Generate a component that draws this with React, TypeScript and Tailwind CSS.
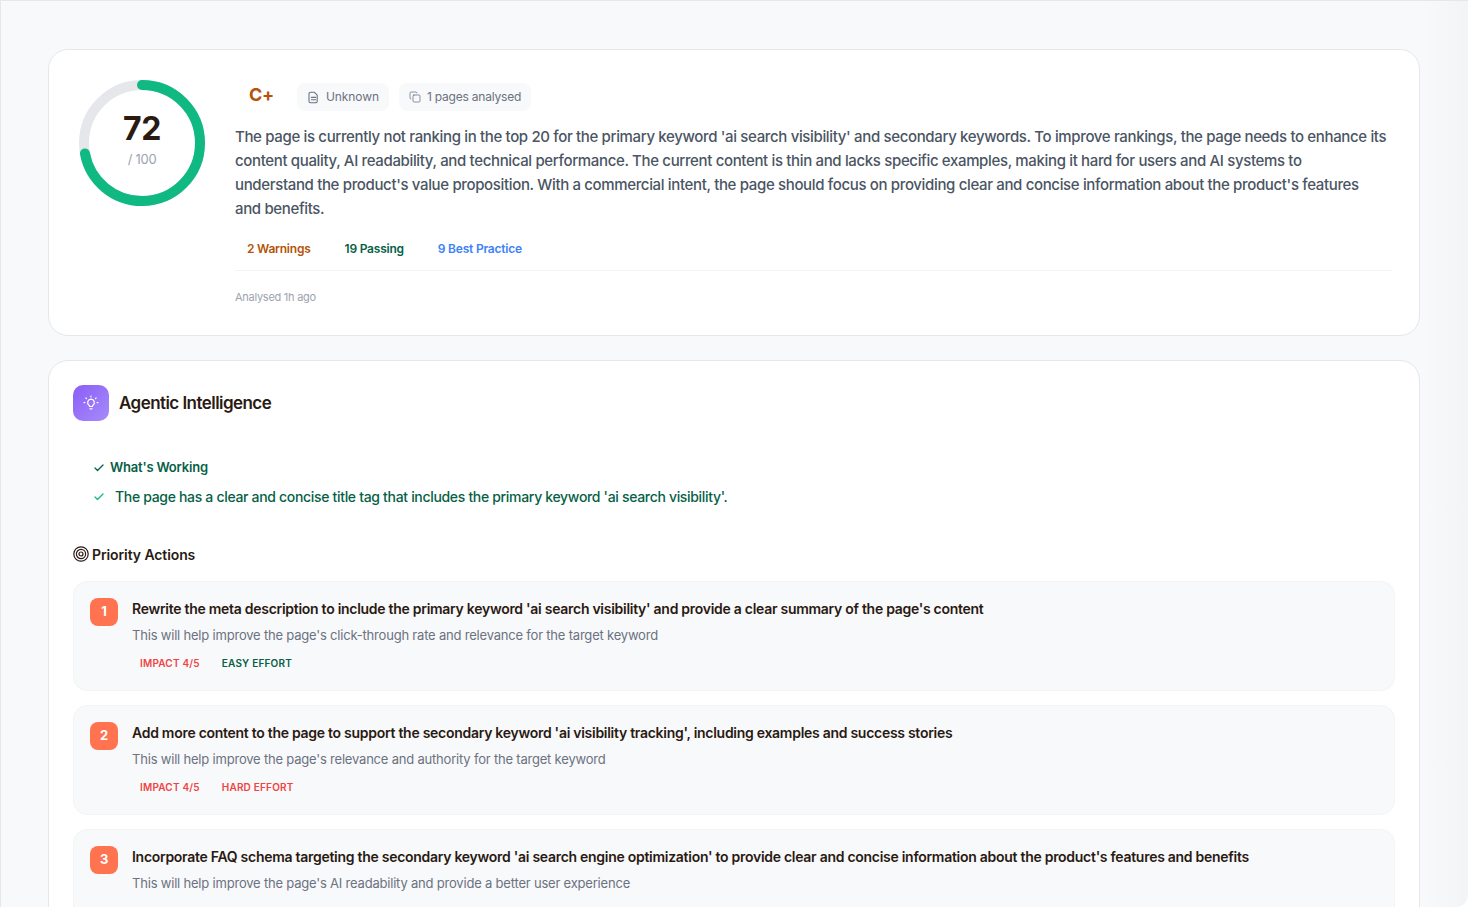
import { Check, Copy } from "lucide-react";

const actions = [
  {
    n: 1,
    title:
      "Rewrite the meta description to include the primary keyword 'ai search visibility' and provide a clear summary of the page's content",
    body: "This will help improve the page's click-through rate and relevance for the target keyword",
    effort: "EASY EFFORT",
    effortClass: "text-[#065f46]",
  },
  {
    n: 2,
    title:
      "Add more content to the page to support the secondary keyword 'ai visibility tracking', including examples and success stories",
    body: "This will help improve the page's relevance and authority for the target keyword",
    effort: "HARD EFFORT",
    effortClass: "text-[#ef4444]",
  },
  {
    n: 3,
    title:
      "Incorporate FAQ schema targeting the secondary keyword 'ai search engine optimization' to provide clear and concise information about the product's features and benefits",
    body: "This will help improve the page's AI readability and provide a better user experience",
    effort: "HARD EFFORT",
    effortClass: "text-[#ef4444]",
  },
];

const ScoreRing = () => (
  <div className="relative w-[128px] h-[128px] shrink-0 -mt-[1px]">
    <svg className="w-full h-full -rotate-90" viewBox="0 0 128 128">
      <circle cx="64" cy="64" r="58" fill="none" stroke="#e5e7eb" strokeWidth="10" />
      <circle
        cx="64"
        cy="64"
        r="58"
        fill="none"
        stroke="#10b981"
        strokeWidth="10"
        strokeLinecap="round"
        strokeDasharray="262.4 364.4"
      />
    </svg>
    <div className="absolute inset-0 flex flex-col items-center pt-[30px]">
      <span className="text-[32px] leading-[40px] font-bold text-[#2a1a12] tracking-[-0.5px]">72</span>
      <span className="text-[13px] leading-[20px] text-[#9ca3af]">/ 100</span>
    </div>
  </div>
);

const Target = () => (
  <svg width="16" height="16" viewBox="0 0 16 16" fill="none" stroke="#2a1a12" strokeWidth="1.2">
    <circle cx="8" cy="8" r="7.2" />
    <circle cx="8" cy="8" r="4.6" />
    <circle cx="8" cy="8" r="2" />
  </svg>
);

const Bulb = () => (
  <svg width="16" height="16" viewBox="0 0 16 16" fill="none" stroke="white" strokeWidth="1.2" strokeLinecap="round">
    <path d="M8 4.2a3.4 3.4 0 0 0-2 6.1c.4.3.6.7.6 1.2h2.8c0-.5.2-.9.6-1.2a3.4 3.4 0 0 0-2-6.1z" />
    <path d="M6.9 13.6c.6.5 1.6.5 2.2 0" />
    <path d="M8 1v.9M2.9 3l.6.6M13.1 3l-.6.6M1 7.6h.9M14.1 7.6h.9" />
  </svg>
);

const Doc = () => (
  <svg width="13" height="13" viewBox="0 0 13 13" fill="none" stroke="currentColor" strokeWidth="1.1" strokeLinejoin="round" strokeLinecap="round">
    <path d="M3.6 1.2h3.6l3 3v6a1.6 1.6 0 0 1-1.6 1.6H3.6A1.6 1.6 0 0 1 2 10.2V2.8a1.6 1.6 0 0 1 1.6-1.6z" />
    <path d="M4.4 6.4h4.2M4.4 8.8h4.2" />
  </svg>
);

export default function App() {
  return (
    <div
      className="h-[907px] overflow-hidden bg-gradient-to-r from-[#f8f9fb] via-[#f8f9fb] via-[97%] to-[#f3f4f6] border-t border-l border-[#e5e7eb] rounded-br-[12px] pl-[47px] pr-[48px] pt-[48px] tracking-[-0.26px]"
      style={{ fontFamily: "Inter, 'Noto Sans', sans-serif" }}
    >
      <section className="h-[287px] bg-white border border-[#e5e7eb] rounded-[20px] pl-[29px] pr-[27px] pt-[30px] flex gap-[29px]">
        <ScoreRing />
        <div className="flex-1 min-w-0">
          <div className="flex items-center h-[28px] mt-[3px]">
            <span className="w-[62px] pl-[14px] -mt-[4px] text-[18px] font-bold text-[#b45309] leading-[28px]">C+</span>
            <span className="flex items-center gap-[6px] h-[28px] px-[10px] rounded-[8px] bg-[#f8f9fb] text-[12px] tracking-[-0.1px] text-[#6b7280]">
              <Doc />
              Unknown
            </span>
            <span className="flex items-center gap-[6px] h-[28px] ml-[10px] px-[10px] rounded-[8px] bg-[#f8f9fb] text-[12px] tracking-[-0.2px] text-[#6b7280]">
              <Copy size={12} strokeWidth={1.5} />
              1 pages analysed
            </span>
          </div>
          <p className="mt-[14px] text-[15px] leading-[24px] text-[#4b5563] tracking-[-0.35px] font-[450]">
            The page is currently not ranking in the top 20 for the primary keyword 'ai search visibility' and secondary keywords. To improve rankings, the page needs to enhance its content quality, AI readability, and technical performance. The current content is thin and lacks specific examples, making it hard for users and AI systems to
            <br />
            understand the product's value proposition. With a commercial intent, the page should focus on providing clear and concise information about the product's features
            <br />
            and benefits.
          </p>
          <div className="flex items-center gap-[34px] mt-[18px] pl-[12px] pb-[11px] text-[12px] leading-[20px] font-semibold border-b border-[#f3f4f6] tracking-[-0.22px]">
            <span className="text-[#b45309]">2 Warnings</span>
            <span className="text-[#065f46]">19 Passing</span>
            <span className="text-[#3b82f6]">9 Best Practice</span>
          </div>
          <p className="mt-[16px] text-[11px] leading-[20px] text-[#9ca3af]">Analysed 1h ago</p>
        </div>
      </section>

      <section className="mt-[24px] bg-white border border-[#e5e7eb] rounded-[20px] p-[24px] h-[700px]">
        <div className="flex items-center gap-[10px]">
          <div className="w-[36px] h-[36px] rounded-[10px] bg-gradient-to-br from-[#8b5cf6] to-[#a78bfa] flex items-center justify-center">
            <Bulb />
          </div>
          <h2 className="text-[17px] leading-[28px] font-semibold text-[#2a1a12] tracking-[-0.55px]">Agentic Intelligence</h2>
        </div>

        <div className="mt-[35px] pl-[20px]">
          <div className="flex items-center gap-[5px] h-[24px] text-[#065f46] text-[13px] font-semibold tracking-[-0.2px]">
            <Check size={12} strokeWidth={2.5} />
            What's Working
          </div>
          <div className="flex items-center gap-[10px] mt-[4px] h-[24px] text-[14px] text-[#065f46] font-[450] tracking-[-0.32px]">
            <Check size={12} strokeWidth={2.5} className="text-[#10b981] mt-[2px]" />
            The page has a clear and concise title tag that includes the primary keyword 'ai search visibility'.
          </div>
        </div>

        <div className="flex items-center gap-[3px] mt-[34px] h-[24px] text-[14px] font-semibold text-[#2a1a12] tracking-[-0.1px]">
          <Target />
          Priority Actions
        </div>

        <div className="flex flex-col gap-[14px] mt-[15px]">
          {actions.map((a) => (
            <div
              key={a.n}
              className="h-[110px] bg-[#f8f9fb] border border-[#f3f4f6] rounded-[14px] pl-[16px] pr-[16px] pt-[16px] flex gap-[14px]"
            >
              <div className="w-[28px] h-[28px] shrink-0 rounded-[8px] bg-[#ff7350] text-white text-[13px] font-bold flex items-center justify-center">
                {a.n}
              </div>
              <div className="min-w-0">
                <h3 className="text-[14px] leading-[22px] font-semibold text-[#2a1a12] tracking-[-0.28px]">{a.title}</h3>
                <p className="mt-[4px] text-[13px] leading-[22px] text-[#6b7280] tracking-[-0.2px]">{a.body}</p>
                <div className="flex gap-[22px] mt-[9px] pl-[8px] text-[10px] leading-[16px] font-semibold tracking-[0.2px]">
                  <span className="text-[#ef4444]">IMPACT 4/5</span>
                  <span className={a.effortClass}>{a.effort}</span>
                </div>
              </div>
            </div>
          ))}
        </div>
      </section>
    </div>
  );
}
